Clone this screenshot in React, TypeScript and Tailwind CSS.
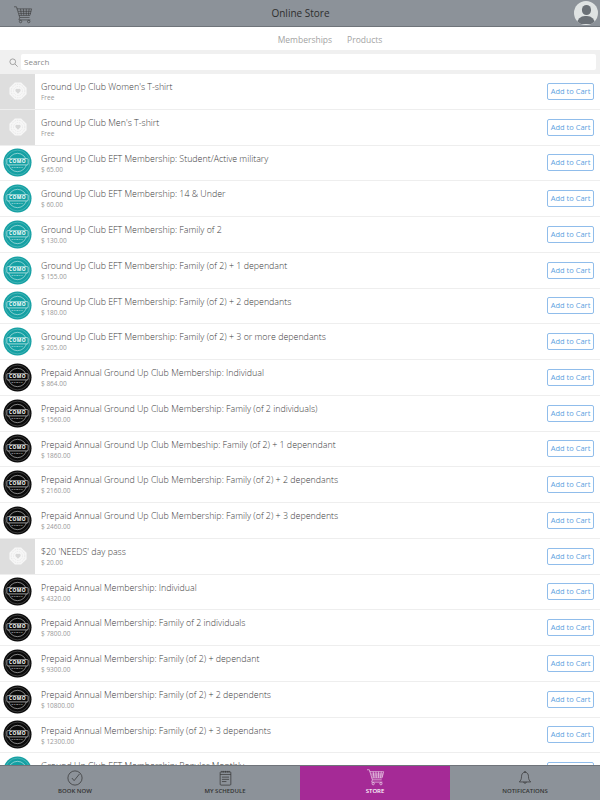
const rows: [string, string, string][] = [
  ["Ground Up Club Women's T-shirt", "Free", "none"],
  ["Ground Up Club Men's T-shirt", "Free", "none"],
  ["Ground Up Club EFT Membership: Student/Active military", "$ 65.00", "teal"],
  ["Ground Up Club EFT Membership: 14 & Under", "$ 60.00", "teal"],
  ["Ground Up Club EFT Membership: Family of 2", "$ 130.00", "teal"],
  ["Ground Up Club EFT Membership: Family (of 2) + 1 dependant", "$ 155.00", "teal"],
  ["Ground Up Club EFT Membership: Family (of 2) + 2 dependants", "$ 180.00", "teal"],
  ["Ground Up Club EFT Membership: Family (of 2) + 3 or more dependants", "$ 205.00", "teal"],
  ["Prepaid Annual Ground Up Club Membership: Individual", "$ 864.00", "black"],
  ["Prepaid Annual Ground Up Club Membership: Family (of 2 individuals)", "$ 1560.00", "black"],
  ["Prepaid Annual Ground Up Club Membeship: Family (of 2) + 1 depenndant", "$ 1860.00", "black"],
  ["Prepaid Annual Ground Up Club Membership: Family (of 2) + 2 dependants", "$ 2160.00", "black"],
  ["Prepaid Annual Ground Up Club Membership: Family (of 2) + 3 dependents", "$ 2460.00", "black"],
  ["$20 'NEEDS' day pass", "$ 20.00", "none"],
  ["Prepaid Annual Membership: Individual", "$ 4320.00", "black"],
  ["Prepaid Annual Membership: Family of 2 individuals", "$ 7800.00", "black"],
  ["Prepaid Annual Membership: Family (of 2) + dependant", "$ 9300.00", "black"],
  ["Prepaid Annual Membership: Family (of 2) + 2 dependents", "$ 10800.00", "black"],
  ["Prepaid Annual Membership: Family (of 2) + 3 dependants", "$ 12300.00", "black"],
  ["Ground Up Club EFT Membership: Regular Monthly", "$ 65.00", "teal"],
];

const CartIcon = ({ className, color }: { className: string; color: string }) => (
  <svg viewBox="0 0 24 22" className={className} fill="none" stroke={color} strokeWidth="0.7">
    <path d="M1 1h3l4 13h12" />
    <path d="M4.500 3.500h18l-2 8H7M6 6.500h16M7 9h14.500M9 3.500l1 8M12.500 3.500l.5 8M16 3.500v8M19.500 3.500l-1 8" />
    <path d="M8 14l-1 3h14" />
    <circle cx="9" cy="19" r="1.500" />
    <circle cx="19" cy="19" r="1.500" />
  </svg>
);

const ComoLogo = ({ color }: { color: string }) => (
  <div className="w-[35px] h-full shrink-0 flex items-center justify-center">
    <svg viewBox="0 0 30 30" className="w-[29px] h-[29px]">
      <circle cx="15" cy="15" r="14.500" fill={color} />
      <circle cx="15" cy="15" r="12.800" fill="none" stroke="#fff" strokeWidth="0.35" strokeOpacity="0.6" />
      <circle cx="15" cy="15" r="9.500" fill="none" stroke="#fff" strokeWidth="0.5" />
      <rect x="4" y="11" width="22" height="6.500" rx="1" fill={color} stroke="#fff" strokeWidth="0.6" />
      <text x="15" y="16" textAnchor="middle" fontSize="5" fontWeight="700" letterSpacing="0.4" fill="#fff" fontFamily="'Open Sans', sans-serif">COMO</text>
      <text x="15" y="21" textAnchor="middle" fontSize="2.500" letterSpacing="0.8" fill="#fff" fontFamily="'Open Sans', sans-serif">GROUP</text>
    </svg>
  </div>
);

const Placeholder = () => (
  <div className="w-[35px] h-full shrink-0 bg-[#dedede] flex items-center justify-center">
    <svg viewBox="0 0 20 20" className="w-[18px] h-[18px]">
      <path d="M6.500 0.500h7L19.500 6.500v7L13.500 19.500h-7L0.500 13.500v-7z" fill="#f7f7f7" />
      <circle cx="10" cy="10" r="7.500" fill="none" stroke="#d4d4d4" strokeWidth="0.6" strokeDasharray="1 1" />
      <circle cx="10" cy="10" r="5" fill="none" stroke="#d4d4d4" strokeWidth="0.5" strokeDasharray="1 1" />
      <path d="M10 13L7.300 10.200a1.800 1.800 0 0 1 2.700-2.300 1.800 1.800 0 0 1 2.700 2.300z" fill="#d8d8d8" />
    </svg>
  </div>
);

const FooterTab = ({ label, active, children }: { label: string; active?: boolean; children: React.ReactNode }) => (
  <div className={`flex-1 flex flex-col items-center pt-[3px] ${active ? "bg-[#a52a96] text-white" : "bg-[#8c9299] text-[#333]"}`}>
    <div className="h-[17px] flex items-center justify-center">{children}</div>
    <span className="mt-[1px] text-[6px] leading-[8px] font-semibold uppercase">{label}</span>
  </div>
);

export default function App() {
  return (
    <div className="h-screen flex flex-col overflow-hidden bg-white font-['Open_Sans',sans-serif]">
      <header className="h-[27px] shrink-0 bg-[#8c9299] border-b border-[#6f747a] flex items-center pl-[13px] pr-[2px]">
        <CartIcon className="w-[20px] h-[18px] mt-[3px]" color="#333" />
        <span className="flex-1 text-center text-[10px] text-[#2e2e2e] pr-[6px]">Online Store</span>
        <div className="w-[24px] h-[24px] rounded-full bg-[#dfe3e3] overflow-hidden flex flex-col items-center pt-[4px]">
          <div className="w-[9px] h-[10px] rounded-full bg-[#6a7076]" />
          <div className="w-[18px] h-[8px] mt-[1px] rounded-t-full bg-[#6a7076]" />
        </div>
      </header>

      <nav className="h-[23px] shrink-0 flex items-center justify-center gap-[15px] pl-[60px] pt-[3px] text-[8.5px] text-[#a3a3a3]">
        <span>Memberships</span>
        <span>Products</span>
      </nav>

      <div className="h-[24px] shrink-0 bg-[#f0f0f0] flex items-center pl-[9px] pr-[4px]">
        <svg viewBox="0 0 12 12" className="w-[9px] h-[9px] shrink-0" fill="none" stroke="#9a9a9a" strokeWidth="1.2">
          <circle cx="5" cy="5" r="3.800" />
          <path d="M8 8l3.500 3.500" />
        </svg>
        <div className="ml-[3px] flex-1 h-[16px] bg-white rounded-[2px] flex items-center pl-[3px] text-[8px] text-[#8a8a8a]">Search</div>
      </div>

      <main className="flex-1 min-h-0 overflow-hidden">
        {rows.map(([title, price, logo]) => (
          <div key={title} className="h-[35.75px] flex items-center border-b border-[#eeeeee]">
            {logo === "none" ? <Placeholder /> : <ComoLogo color={logo === "teal" ? "#14a0a3" : "#0a0a0a"} />}
            <div className="ml-[6px] flex-1 min-w-0 pt-[0.5px]">
              <div className="text-[8.85px] leading-[12px] font-light text-[#3c3c3c] truncate">{title}</div>
              <div className="text-[6.5px] leading-[9px] text-[#999]">{price}</div>
            </div>
            <button className="mr-[6px] w-[47px] h-[17px] border border-[#90bdeb] rounded-[2px] text-[7.5px] text-[#5c9fe0] bg-white">Add to Cart</button>
          </div>
        ))}
      </main>

      <footer className="h-[35px] shrink-0 flex border-t border-[#6f747a]">
        <FooterTab label="Book Now">
          <svg viewBox="0 0 18 18" className="w-[16px] h-[16px]" fill="none" stroke="#333" strokeWidth="0.8">
            <circle cx="9" cy="9" r="8" />
            <path d="M5.500 9l2.500 3L14 4.500" />
          </svg>
        </FooterTab>
        <FooterTab label="My Schedule">
          <svg viewBox="0 0 14 18" className="w-[13px] h-[16px]" fill="none" stroke="#333" strokeWidth="0.8">
            <rect x="1" y="2" width="12" height="15" rx="1" />
            <path d="M1 5h12M3 1v2M5 1v2M7 1v2M9 1v2M11 1v2M3 8h8M3 10.500h8M3 13h5" />
          </svg>
        </FooterTab>
        <FooterTab label="Store" active>
          <CartIcon className="w-[19px] h-[17px]" color="#fff" />
        </FooterTab>
        <FooterTab label="Notifications">
          <svg viewBox="0 0 16 18" className="w-[14px] h-[16px]" fill="none" stroke="#333" strokeWidth="0.8">
            <path d="M8 2.500c-3 0-4 2.500-4 5 0 3-1 4.500-2.500 6h13C13 12 12 10.500 12 7.500c0-2.500-1-5-4-5zM7 2.500a1 1 0 0 1 2 0M6.500 13.500a1.500 1.500 0 0 0 3 0" />
          </svg>
        </FooterTab>
      </footer>
    </div>
  );
}
